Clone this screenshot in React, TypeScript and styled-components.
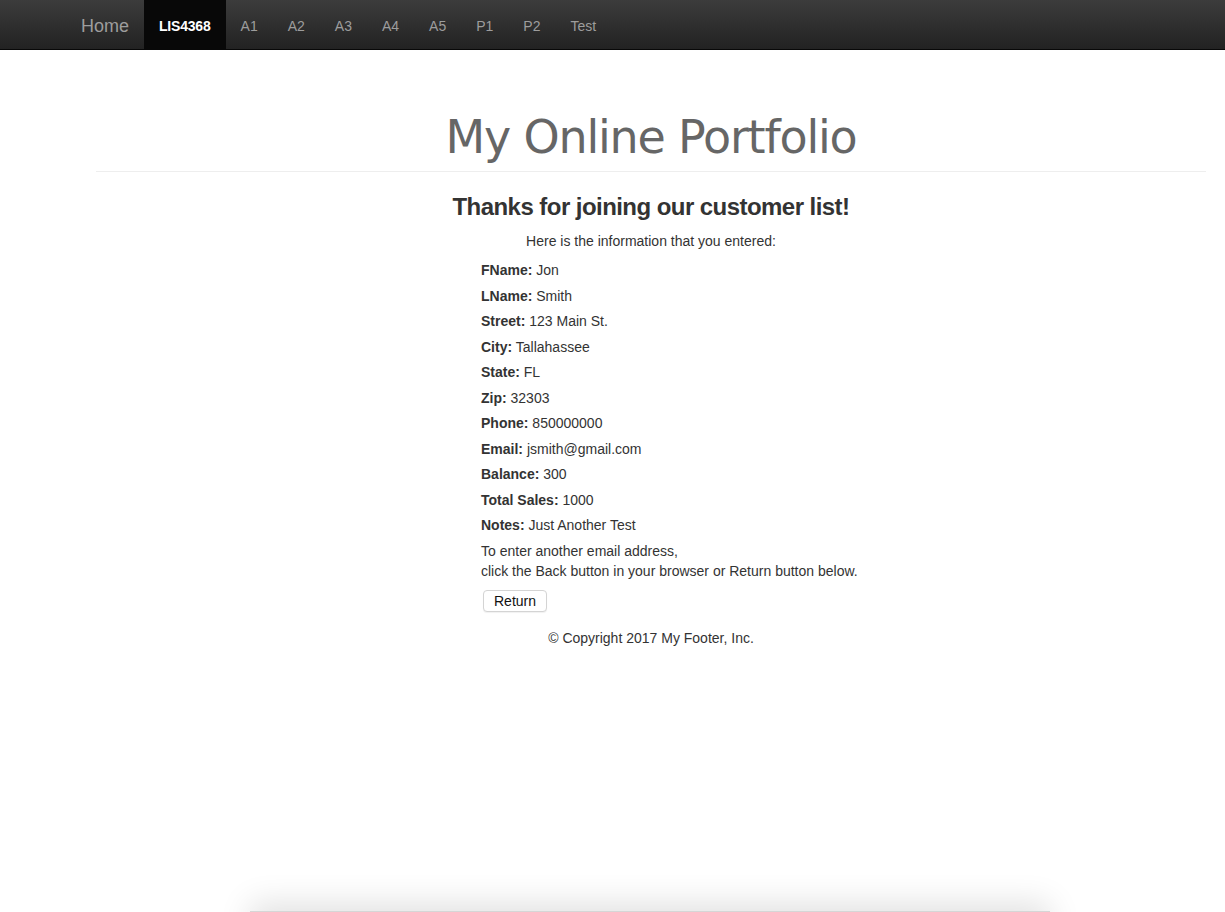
import React from "react";
import styled, { createGlobalStyle } from "styled-components";

const Global = createGlobalStyle`
  html, body { margin: 0; padding: 0; background: #fff; }
  body {
    font-family: "Liberation Sans", Arial, sans-serif;
    font-size: 14px;
    line-height: 20px;
    color: #333;
  }
`;

const Page = styled.div`
  min-height: 912px;
  display: flex;
  flex-direction: column;
  overflow: hidden;
`;

const NavBar = styled.nav`
  height: 50px;
  background: linear-gradient(to bottom, #3c3c3c 0%, #222 100%);
  border-bottom: 1px solid #080808;
  display: flex;
  align-items: stretch;
  padding-left: 66px;
  box-sizing: border-box;
`;

const Brand = styled.a`
  font-size: 18px;
  color: #9d9d9d;
  padding: 0 15px;
  display: flex;
  align-items: center;
  line-height: 20px;
  padding-top: 2px;
  text-decoration: none;
`;

const NavItem = styled.a<{ $active?: boolean }>`
  display: flex;
  align-items: center;
  padding: 2px 15px 0;
  font-size: 14px;
  color: ${(p) => (p.$active ? "#fff" : "#9d9d9d")};
  background: ${(p) => (p.$active ? "#080808" : "transparent")};
  font-weight: ${(p) => (p.$active ? 700 : 400)};
  letter-spacing: ${(p) => (p.$active ? "-0.2px" : "0")};
  text-decoration: none;
`;

const Main = styled.main`
  padding: 0 19px 0 96px;
  display: flex;
  flex-direction: column;
`;

const Header = styled.header`
  border-bottom: 1px solid #eee;
  padding-top: 59px;
  padding-bottom: 6px;
  text-align: center;
`;

const Title = styled.h1`
  margin: 0;
  font-family: "DejaVu Sans", "Liberation Sans", sans-serif;
  font-weight: 400;
  font-size: 46px;
  line-height: 56px;
  letter-spacing: -1.2px;
  color: #666;
`;

const Content = styled.section`
  display: flex;
  flex-direction: column;
`;

const Heading = styled.h2`
  margin: 20px 0 0;
  text-align: center;
  font-size: 24px;
  line-height: 30px;
  font-weight: 700;
  color: #333;
  letter-spacing: -0.55px;
`;

const Intro = styled.p`
  margin: 9px 0 9px;
  text-align: center;
`;

const Details = styled.div`
  padding-left: 385px;
  display: flex;
  flex-direction: column;
`;

const Row = styled.p`
  margin: 0 0 5.5px;
  line-height: 20px;
`;

const Label = styled.b`
  font-weight: 700;
`;

const Note = styled.p`
  margin: 0 0 9px;
`;

const Button = styled.button`
  align-self: flex-start;
  font-family: "Liberation Sans", Arial, sans-serif;
  font-size: 14px;
  color: #111;
  background: #fff;
  border: 1px solid #d4d4d4;
  border-radius: 4px;
  padding: 0 10px;
  height: 22px;
  line-height: 20px;
  margin-left: 2px;
  box-shadow: 0 1px 1px rgba(0,0,0,0.06);
`;

const Footer = styled.footer`
  text-align: center;
  margin-top: 16px;
`;

const ShadowWrap = styled.div`
  margin-top: 263px;
  display: flex;
  justify-content: center;
`;

const ShadowBox = styled.div`
  width: 800px;
  margin-left: 74px;
  height: 40px;
  border-top: 1px solid #d6d6d6;
  background: #fff;
  box-shadow: 0 -8px 32px rgba(0, 0, 0, 0.12);
`;

const rows: [string, string][] = [
  ["FName:", "Jon"],
  ["LName:", "Smith"],
  ["Street:", "123 Main St."],
  ["City:", "Tallahassee"],
  ["State:", "FL"],
  ["Zip:", "32303"],
  ["Phone:", "850000000"],
  ["Email:", "jsmith@gmail.com"],
  ["Balance:", "300"],
  ["Total Sales:", "1000"],
  ["Notes:", "Just Another Test"],
];

const navItems = ["A1", "A2", "A3", "A4", "A5", "P1", "P2", "Test"];

export default function App() {
  return (
    <Page>
      <Global />
      <NavBar>
        <Brand href="#">Home</Brand>
        <NavItem href="#" $active>LIS4368</NavItem>
        {navItems.map((n) => (
          <NavItem key={n} href="#">{n}</NavItem>
        ))}
      </NavBar>
      <Main>
        <Header>
          <Title>My Online Portfolio</Title>
        </Header>
        <Content>
          <Heading>Thanks for joining our customer list!</Heading>
          <Intro>Here is the information that you entered:</Intro>
          <Details>
            {rows.map(([l, v]) => (
              <Row key={l}>
                <Label>{l}</Label> {v}
              </Row>
            ))}
            <Note>
              To enter another email address,
              <br />
              click the Back button in your browser or Return button below.
            </Note>
            <Button>Return</Button>
          </Details>
          <Footer>© Copyright 2017 My Footer, Inc.</Footer>
        </Content>
      </Main>
      <ShadowWrap>
        <ShadowBox />
      </ShadowWrap>
    </Page>
  );
}
